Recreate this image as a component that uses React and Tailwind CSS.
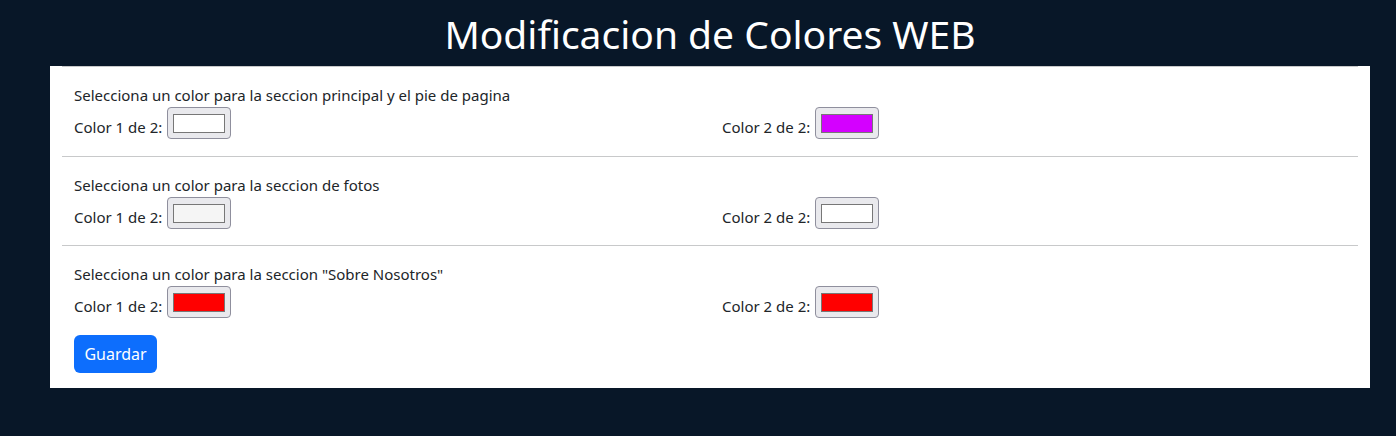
import React from "react";

const sections = [
  { title: "Selecciona un color para la seccion principal y el pie de pagina", c1: "#ffffff", c2: "#d400ff", pad: "pb-[17px]" },
  { title: "Selecciona un color para la seccion de fotos", c1: "#f5f5f5", c2: "#ffffff", pad: "pb-[16px]" },
  { title: 'Selecciona un color para la seccion "Sobre Nosotros"', c1: "#ff0000", c2: "#ff0000", pad: "pb-0" },
];

const Swatch = ({ color }) => (
  <div className="flex h-8 w-16 items-center justify-center rounded-[4px] border border-[#8f8f9d] bg-[#e9e9ed]">
    <div className="h-[19px] w-[52px] border border-[#777777]" style={{ backgroundColor: color }} />
  </div>
);

const ColorField = ({ label, color }) => (
  <div className="flex items-end px-3">
    <span className="leading-6">{label}</span>
    <span className="ml-[5px]">
      <Swatch color={color} />
    </span>
  </div>
);

export default function App() {
  return (
    <div
      className="min-h-[436px] bg-[#081728] pl-[50px] pr-[26px] text-[15px] text-[#212529]"
      style={{ fontFamily: '"Noto Sans", "Open Sans", sans-serif' }}
    >
      <h1 className="pt-[10px] pb-2 text-center text-[39px] leading-[48px] text-white">
        Modificacion de Colores WEB
      </h1>
      <div className="bg-white px-3 pb-[15px]">
        {sections.map((s, i) => (
          <div key={i} className={`border-t border-[#c8c9ca] pt-[17px] ${s.pad}`}>
            <p className="px-3 leading-[23px]">{s.title}</p>
            <div className="grid grid-cols-2">
              <ColorField label="Color 1 de 2:" color={s.c1} />
              <ColorField label="Color 2 de 2:" color={s.c2} />
            </div>
          </div>
        ))}
        <div className="px-3 pt-[17px]">
          <button className="h-[38px] w-[83px] rounded-md bg-[#0d6efd] text-[16px] text-white">Guardar</button>
        </div>
      </div>
    </div>
  );
}
